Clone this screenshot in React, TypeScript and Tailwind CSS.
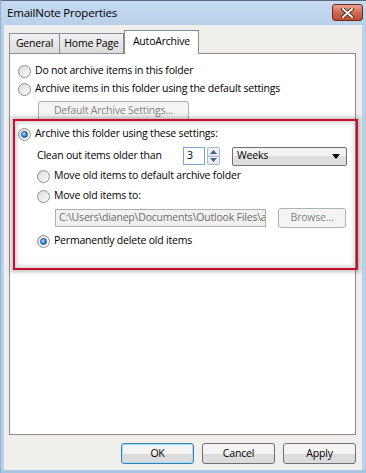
import React from 'react';

const font = { fontFamily: '"Open Sans", "Noto Sans", sans-serif' };

function Radio({ checked }: { checked?: boolean }) {
  return (
    <span className="relative flex h-[13px] w-[13px] shrink-0 items-center justify-center rounded-full border border-[#8e8f8f] bg-gradient-to-br from-[#dcdcdc] to-[#fbfbfb]">
      {checked && (
        <span className="h-[7px] w-[7px] rounded-full border border-[#1b4f8a] bg-[radial-gradient(circle_at_35%_35%,#b8e0ff,#2a7fd4_60%,#0d4d99)]" />
      )}
    </span>
  );
}

function RadioRow({ checked, label, indent }: { checked?: boolean; label: string; indent?: boolean }) {
  return (
    <div className={`flex h-[18px] items-center gap-[4px] whitespace-nowrap ${indent ? 'pl-[27px]' : 'pl-[8px]'}`}>
      <Radio checked={checked} />
      <span className="text-black">{label}</span>
    </div>
  );
}

function DialogButton({ label, primary }: { label: string; primary?: boolean }) {
  return (
    <div
      className={`flex h-[21px] w-[73px] items-center justify-center rounded-[3px] border bg-gradient-to-b from-[#f4f4f4] from-50% to-[#dcdcdc] to-50% text-black ${
        primary ? 'border-[#3c7fb1] shadow-[inset_0_0_0_1px_#9fe0fb]' : 'border-[#707070]'
      }`}
    >
      {label}
    </div>
  );
}

export default function App() {
  return (
    <div
      className="flex h-[473px] w-[366px] flex-col overflow-hidden border-l border-[#8fb1d8] bg-[#b9d1ea] text-[10.5px] tracking-[-0.2px]"
      style={font}
    >
      {/* title bar */}
      <div className="flex h-[25px] shrink-0 items-center justify-between border-t border-[#5c6b7c] bg-gradient-to-b from-[#c6daf0] to-[#b9d1ea] pl-[6px] pr-[3px]">
        <span className="text-[11.5px] text-black">EmailNote Properties</span>
        <div className="mb-[4px] flex h-[17px] w-[31px] items-center justify-center self-end rounded-[3px] border border-[#6d2a22] bg-gradient-to-b from-[#e8a593] via-[#cf6a52] to-[#c24a2f]">
          <svg width="13" height="10" viewBox="0 0 13 10">
            <path d="M2 1 L11 9 M11 1 L2 9" stroke="#3b1a14" strokeWidth="3.6" strokeLinecap="square" />
            <path d="M2 1 L11 9 M11 1 L2 9" stroke="#ffffff" strokeWidth="2" strokeLinecap="square" />
          </svg>
        </div>
      </div>

      {/* client area */}
      <div className="ml-[3px] mr-[4px] flex flex-1 flex-col bg-[#f0efeb] pl-[5px] pr-[1px]">
        {/* tabs */}
        <div className="mt-[5px] flex h-[23px] items-end whitespace-nowrap">
          <div className="flex h-[20px] w-[51px] items-center justify-center border border-b-0 border-[#898c95] bg-gradient-to-b from-[#f2f2f2] to-[#dcdcdc]">
            General
          </div>
          <div className="flex h-[20px] w-[64px] items-center justify-center border border-b-0 border-l-0 border-[#898c95] bg-gradient-to-b from-[#f2f2f2] to-[#dcdcdc]">
            Home Page
          </div>
          <div className="relative z-10 -mb-[1px] flex h-[24px] w-[75px] items-center justify-center border border-b-0 border-[#898c95] bg-white pb-[2px]">
            AutoArchive
          </div>
        </div>

        {/* panel */}
        <div className="relative h-[382px] w-[347px] border border-[#898c95] bg-white">
          <div className="pt-[8px]">
            <RadioRow label="Do not archive items in this folder" />
            <RadioRow label="Archive items in this folder using the default settings" />
            <div className="ml-[28px] mt-[3px] flex h-[20px] w-[151px] items-center justify-center whitespace-nowrap rounded-[3px] border border-[#adb2b5] bg-[#f4f4f4] text-[#838383]">
              Default Archive Settings...
            </div>
            <div className="mt-[4px]">
              <RadioRow checked label="Archive this folder using these settings:" />
            </div>
            <div className="mt-[3px] flex h-[20px] items-center whitespace-nowrap pl-[27px]">
              <span className="w-[146px]">Clean out items older than</span>
              <div className="flex h-[18px] w-[22px] items-center border border-[#7da2ce] bg-white pl-[3px]">3</div>
              <div className="ml-[2px] flex h-[18px] w-[13px] flex-col">
                <div className="flex flex-1 items-center justify-center rounded-t-[2px] border border-[#a9b7c9] bg-gradient-to-b from-[#f4f7fb] to-[#dfe6ee]">
                  <svg width="7" height="4" viewBox="0 0 7 4"><path d="M0 4 L3.5 0 L7 4 Z" fill="#4d6185" /></svg>
                </div>
                <div className="flex flex-1 items-center justify-center rounded-b-[2px] border border-t-0 border-[#a9b7c9] bg-gradient-to-b from-[#f4f7fb] to-[#dfe6ee]">
                  <svg width="7" height="4" viewBox="0 0 7 4"><path d="M0 0 L3.5 4 L7 0 Z" fill="#4d6185" /></svg>
                </div>
              </div>
              <div className="ml-[12px] flex h-[19px] w-[115px] items-center justify-between rounded-[2px] border border-[#707070] bg-gradient-to-b from-[#f2f2f2] from-50% to-[#dedede] to-50% pl-[4px] pr-[6px]">
                <span>Weeks</span>
                <svg width="8" height="5" viewBox="0 0 8 5"><path d="M0 0 L8 0 L4 5 Z" fill="#000" /></svg>
              </div>
            </div>
            <div className="mt-[1px]">
              <RadioRow indent label="Move old items to default archive folder" />
            </div>
            <div className="mt-[2px]">
              <RadioRow indent label="Move old items to:" />
            </div>
            <div className="mt-[3px] flex h-[20px] items-center whitespace-nowrap pl-[45px]">
              <div className="flex h-[18px] w-[211px] items-center overflow-hidden border border-[#afafaf] bg-[#f0f0f0] pl-[3px] text-[#6d6d6d]">
                C:\Users\dianep\Documents\Outlook Files\a
              </div>
              <div className="ml-[12px] flex h-[20px] w-[68px] items-center justify-center rounded-[3px] border border-[#adb2b5] bg-[#f4f4f4] text-[#838383]">
                Browse...
              </div>
            </div>
            <div className="mt-[4px]">
              <RadioRow indent checked label="Permanently delete old items" />
            </div>
          </div>

          {/* annotation */}
          <div className="pointer-events-none absolute left-[3px] top-[65px] h-[151px] w-[345px] border-2 border-[#c8102e] shadow-[0_0_4px_2px_rgba(0,0,0,0.25),inset_0_0_4px_2px_rgba(0,0,0,0.18)]" />
        </div>

        {/* buttons */}
        <div className="mt-[8px] flex w-[347px] justify-end gap-[8px]">
          <DialogButton primary label="OK" />
          <DialogButton label="Cancel" />
          <DialogButton label="Apply" />
        </div>
      </div>
      <div className="h-[3px] shrink-0 bg-[#a9c5e4]" />
    </div>
  );
}
